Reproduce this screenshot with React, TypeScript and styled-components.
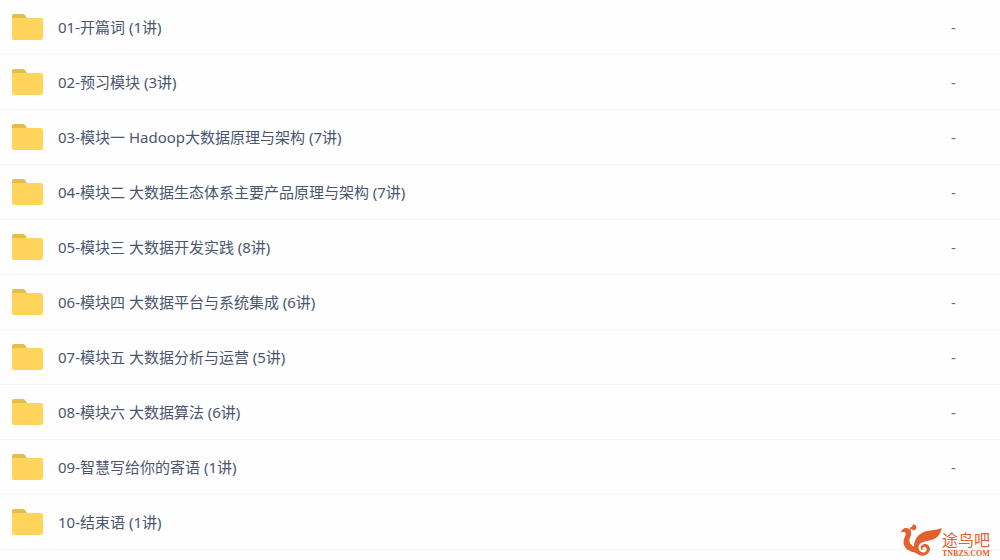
import React from "react";
import styled, { createGlobalStyle } from "styled-components";

const GlobalStyle = createGlobalStyle`
  * { box-sizing: border-box; }
  body {
    margin: 0;
    background: #fefefe;
    color: #4a566e;
    font-family: "Noto Sans", "Noto Sans CJK SC", sans-serif;
    font-size: 15px;
    line-height: 20px;
  }
`;

const Page = styled.main`
  position: relative;
  padding-bottom: 10px;
`;

const FileTable = styled.table`
  width: 100%;
  border-collapse: separate;
  border-spacing: 0;
`;

const Row = styled.tr`
  height: 55px;
`;

const Cell = styled.td`
  padding: 0 0 1px;
  border-bottom: 1px solid #f5f6f8;
  vertical-align: middle;
`;

const NameCell = styled(Cell)`
  padding-left: 12px;
`;

const SizeCell = styled(Cell)`
  width: 49px;
  color: #636d7e;
`;

const FileLink = styled.a`
  display: flex;
  align-items: center;
  gap: 14px;
  color: inherit;
  text-decoration: none;
`;

const FolderSvg = styled.svg`
  width: 32px;
  height: 28px;
  flex: none;
`;

const Watermark = styled.div`
  position: absolute;
  right: 10px;
  bottom: 1px;
  display: flex;
  align-items: flex-end;
  color: #e5602f;
`;

const Phoenix = styled.svg`
  width: 42px;
  height: 32px;
  margin-bottom: 3px;
`;

const Brand = styled.div`
  display: flex;
  flex-direction: column;
  gap: 2px;
`;

const BrandName = styled.span`
  font-family: "Noto Sans CJK SC", sans-serif;
  font-size: 16px;
  line-height: 16px;
`;

const BrandSite = styled.span`
  font-family: "Liberation Serif", serif;
  font-size: 8px;
  font-weight: 700;
  line-height: 10px;
`;

const Folder = () => (
  <FolderSvg viewBox="0 0 32 28" aria-hidden="true">
    <path d="M0 10V3Q0 1 2 1H11Q12 1 13 2L15 5V10Z" fill="#e5bd4c" />
    <path d="M0 6Q0 5 1 5H29Q31 5 31 7V25Q31 27 29 27H2Q0 27 0 25Z" fill="#ffd45a" />
  </FolderSvg>
);

const files = [
  { name: "01-开篇词 (1讲)", size: "-" },
  { name: "02-预习模块 (3讲)", size: "-" },
  { name: "03-模块一 Hadoop大数据原理与架构 (7讲)", size: "-" },
  { name: "04-模块二 大数据生态体系主要产品原理与架构 (7讲)", size: "-" },
  { name: "05-模块三 大数据开发实践 (8讲)", size: "-" },
  { name: "06-模块四 大数据平台与系统集成 (6讲)", size: "-" },
  { name: "07-模块五 大数据分析与运营 (5讲)", size: "-" },
  { name: "08-模块六 大数据算法 (6讲)", size: "-" },
  { name: "09-智慧写给你的寄语 (1讲)", size: "-" },
  { name: "10-结束语 (1讲)", size: "" },
];

export default function App() {
  return (
    <>
      <GlobalStyle />
      <Page>
        <FileTable>
          <tbody>
            {files.map((file) => (
              <Row key={file.name}>
                <NameCell>
                  <FileLink href="#">
                    <Folder />
                    {file.name}
                  </FileLink>
                </NameCell>
                <SizeCell>{file.size}</SizeCell>
              </Row>
            ))}
          </tbody>
        </FileTable>
        <Watermark>
          <Phoenix viewBox="0 0 126 96" fill="currentColor" aria-hidden="true">
            <path d="M1 25C5 21 8 14 15 12C20 11 26 13 30 17C28 10 33 8 37 10C35 5 38 1 43 2C49 3 51 9 48 14C45 19 39 20 35 16C32 15 31 17 32 20C36 29 32 36 29 44C26 54 32 63 43 68C45 76 49 82 55 88C37 84 18 79 13 65C8 53 12 43 16 35C19 29 16 24 12 24C8 23 5 25 1 25Z" />
            <path d="M125 12C122 29 114 40 101 46C87 52 74 50 63 57C52 65 54 79 64 84C73 88 80 83 80 76C80 69 73 66 68 71C66 74 67 77 70 78C64 80 60 74 63 67C68 58 80 58 87 66C95 78 86 92 70 95C54 96 42 84 42 68C42 48 53 34 69 25C86 17 107 20 125 12Z" />
          </Phoenix>
          <Brand>
            <BrandName>途鸟吧</BrandName>
            <BrandSite>TNBZS.COM</BrandSite>
          </Brand>
        </Watermark>
      </Page>
    </>
  );
}
